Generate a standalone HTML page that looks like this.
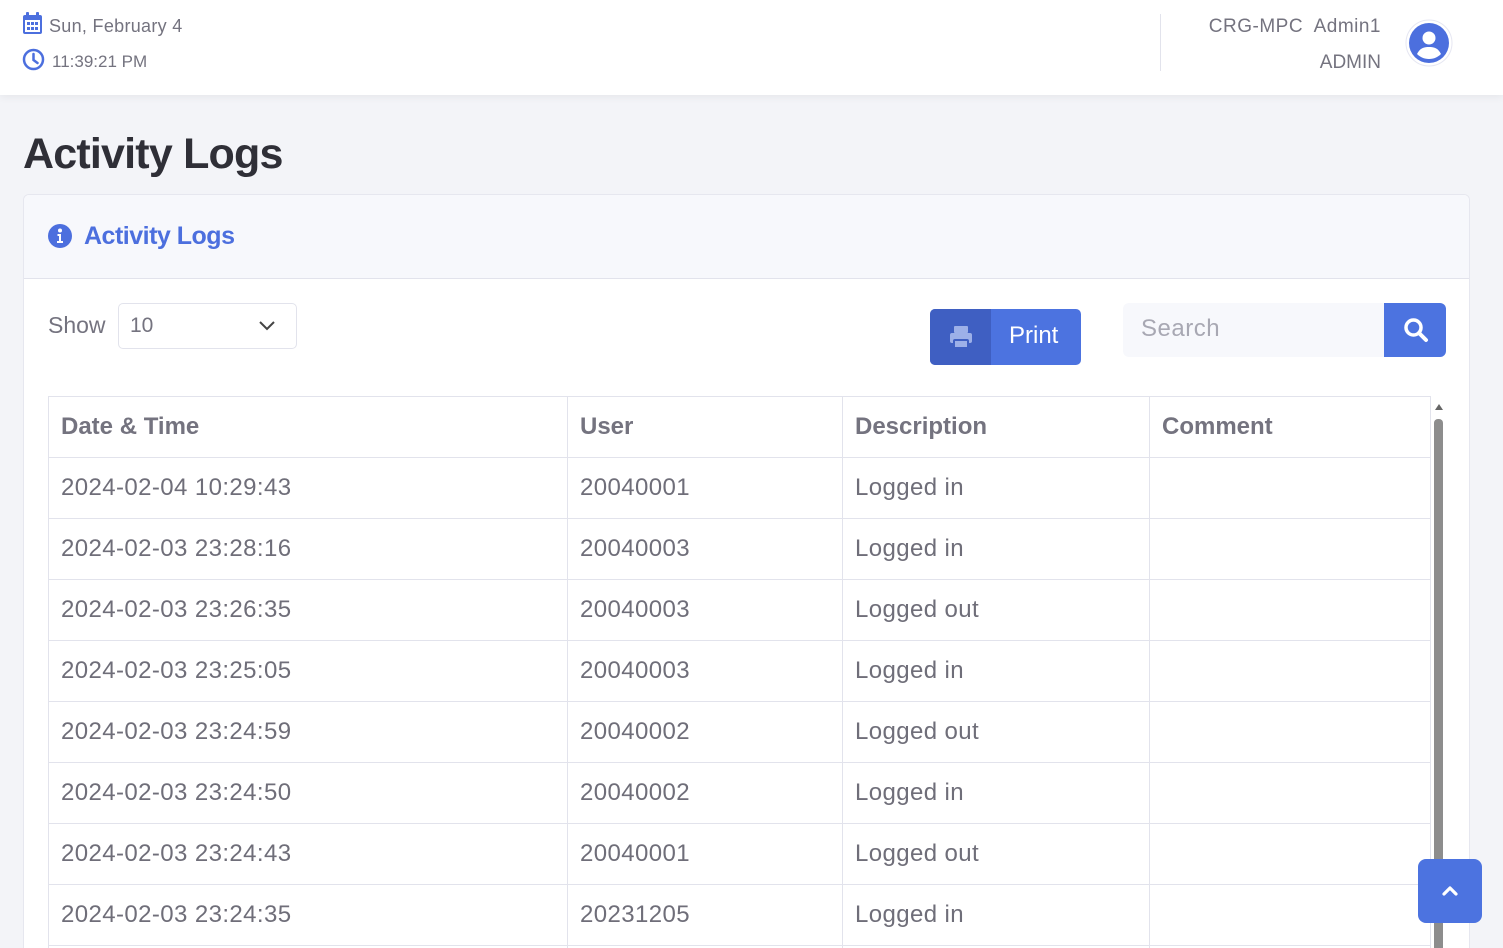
<!DOCTYPE html>
<html><head><style>
*{box-sizing:border-box;margin:0;padding:0}
html{width:1503px;height:948px;overflow:hidden}
body{width:1503px;height:948px;overflow:hidden;background:#f3f4f8;font-family:"Liberation Sans",sans-serif;color:#74737f;position:relative}
.hdr{position:absolute;left:0;top:0;width:1503px;height:95px;background:#fff;box-shadow:0 2px 8px rgba(0,0,0,.06)}
.t{position:absolute;white-space:nowrap}
.card{position:absolute;left:23px;top:194px;width:1447px;height:754px;background:#fff;border:1px solid #e6e7ef;border-bottom:none;border-radius:6px 6px 0 0;overflow:hidden}
.ch{height:84px;background:#f7f8fc;border-bottom:1px solid #e2e3ec}
table{position:absolute;left:24px;top:201px;width:1383px;border-collapse:collapse;font-size:24px;color:#6f6e79;letter-spacing:0.4px}
td,th{border:1px solid #e2e3ec;height:61px;padding:0 12px;text-align:left;font-weight:normal}
th{font-weight:bold;color:#74737f;letter-spacing:0}
</style></head><body>
<div class="hdr">
<svg style="position:absolute;left:22px;top:12px" width="21" height="23" viewBox="0 0 21 23"><rect x="1" y="3" width="19" height="19" rx="2" fill="#4c6fde"/><rect x="4" y="0" width="3" height="5" rx="1" fill="#4c6fde"/><rect x="14" y="0" width="3" height="5" rx="1" fill="#4c6fde"/><rect x="3" y="8" width="15" height="12" fill="#fff"/><g fill="#4c6fde"><rect x="5" y="10" width="3" height="3"/><rect x="9" y="10" width="3" height="3"/><rect x="13" y="10" width="3" height="3"/><rect x="5" y="15" width="3" height="3"/><rect x="9" y="15" width="3" height="3"/><rect x="13" y="15" width="3" height="3"/></g></svg>
<div class="t" style="left:49px;top:16px;font-size:18px;letter-spacing:0.3px">Sun, February 4</div>
<svg style="position:absolute;left:22px;top:48px" width="23" height="23" viewBox="0 0 23 23"><circle cx="11.5" cy="11.5" r="9.5" fill="none" stroke="#4c6fde" stroke-width="2.5"/><path d="M11.5 6v6l4 3" fill="none" stroke="#4c6fde" stroke-width="2.5" stroke-linecap="round"/></svg>
<div class="t" style="left:52px;top:52px;font-size:17px">11:39:21 PM</div>
<div style="position:absolute;left:1160px;top:14px;width:1px;height:57px;background:#e2e3ec"></div>
<div class="t" style="right:122px;top:16px;font-size:19px;letter-spacing:0.5px">CRG-MPC&nbsp; Admin1</div>
<div class="t" style="right:122px;top:52px;font-size:19px">ADMIN</div>
<svg style="position:absolute;left:1405px;top:19px" width="48" height="48" viewBox="0 0 48 48"><circle cx="24" cy="24" r="23" fill="#fff" stroke="#e6e7f2"/><circle cx="24" cy="24" r="20" fill="#4c6fde"/><circle cx="24" cy="19" r="6.5" fill="#fff"/><path d="M12 35c3-6 7-7 12-7s9 1 12 7c-3 3-7 5-12 5s-9-2-12-5z" fill="#fff"/></svg>
</div>
<div class="t" style="left:23px;top:130px;font-size:43px;color:#2f2f37;font-weight:bold;letter-spacing:-0.8px">Activity Logs</div>
<div class="card">
<div class="ch">
<svg style="position:absolute;left:24px;top:29px" width="24" height="24" viewBox="0 0 24 24"><circle cx="12" cy="12" r="12" fill="#4c6fde"/><circle cx="12" cy="6.5" r="2" fill="#fff"/><path d="M9.5 10h3.5v7h2v2h-6v-2h2v-5h-1.5z" fill="#fff"/></svg>
<div class="t" style="left:60px;top:27px;font-size:25px;color:#4c6fde;font-weight:bold;letter-spacing:-0.5px">Activity Logs</div>
</div>
<div class="t" style="left:24px;top:117px;font-size:23px">Show</div>
<div style="position:absolute;left:94px;top:108px;width:179px;height:46px;border:1px solid #e2e3ec;border-radius:5px"><span class="t" style="left:11px;top:10px;font-size:21px">10</span><svg style="position:absolute;left:140px;top:17px" width="16" height="10" viewBox="0 0 16 10"><path d="M1 1l7 7 7-7" fill="none" stroke="#444" stroke-width="2"/></svg></div>
<div style="position:absolute;left:906px;top:114px;width:151px;height:56px;background:#4c73e0;border-radius:5px;overflow:hidden"><div style="width:61px;height:56px;background:#3f5fc2"></div>
<svg style="position:absolute;left:19px;top:16px" width="24" height="24" viewBox="0 0 24 24" fill="#9db0e8"><rect x="5" y="1" width="14" height="7" rx="1"/><rect x="1" y="8" width="22" height="10" rx="2"/><rect x="5" y="15" width="14" height="8" rx="1" fill="#9db0e8" stroke="#3f5fc2" stroke-width="2"/></svg>
<span class="t" style="left:79px;top:13px;font-size:24px;color:#fff">Print</span></div>
<div style="position:absolute;left:1099px;top:108px;width:323px;height:54px;background:#f7f8fc;border-radius:6px;overflow:hidden"><span class="t" style="left:18px;top:12px;font-size:24px;color:#a8a8b3;letter-spacing:0.5px">Search</span><div style="position:absolute;right:0;top:0;width:62px;height:54px;background:#4c73e0"></div>
<svg style="position:absolute;left:280px;top:14px" width="26" height="26" viewBox="0 0 26 26"><circle cx="10.5" cy="10.5" r="7.5" fill="none" stroke="#fff" stroke-width="3.5"/><path d="M16 16l7 7" stroke="#fff" stroke-width="4" stroke-linecap="round"/></svg></div>
<table style="left:24px;top:201px">
<tr><th style="width:519px">Date &amp; Time</th><th style="width:275px">User</th><th style="width:307px">Description</th><th>Comment</th></tr>
<tr><td>2024-02-04 10:29:43</td><td>20040001</td><td>Logged in</td><td></td></tr>
<tr><td>2024-02-03 23:28:16</td><td>20040003</td><td>Logged in</td><td></td></tr>
<tr><td>2024-02-03 23:26:35</td><td>20040003</td><td>Logged out</td><td></td></tr>
<tr><td>2024-02-03 23:25:05</td><td>20040003</td><td>Logged in</td><td></td></tr>
<tr><td>2024-02-03 23:24:59</td><td>20040002</td><td>Logged out</td><td></td></tr>
<tr><td>2024-02-03 23:24:50</td><td>20040002</td><td>Logged in</td><td></td></tr>
<tr><td>2024-02-03 23:24:43</td><td>20040001</td><td>Logged out</td><td></td></tr>
<tr><td>2024-02-03 23:24:35</td><td>20231205</td><td>Logged in</td><td></td></tr>
<tr><td>2024-02-03 23:24:20</td><td>20231205</td><td>Logged out</td><td></td></tr>
</table>
<div style="position:absolute;left:1408px;top:201px;width:14px;height:600px;background:#fff"></div>
<div style="position:absolute;left:1411px;top:209px;width:0;height:0;border-left:4px solid transparent;border-right:4px solid transparent;border-bottom:6px solid #666"></div>
<div style="position:absolute;left:1410px;top:224px;width:9px;height:600px;background:#8d8d8d;border-radius:4px"></div>
</div>
<div style="position:absolute;left:1418px;top:859px;width:64px;height:64px;background:#4c73e0;border-radius:8px"><svg style="position:absolute;left:24px;top:26px" width="16" height="12" viewBox="0 0 16 12"><path d="M2 9l6-6 6 6" fill="none" stroke="#fff" stroke-width="3.2" stroke-linecap="round" stroke-linejoin="round"/></svg></div>
</body></html>
